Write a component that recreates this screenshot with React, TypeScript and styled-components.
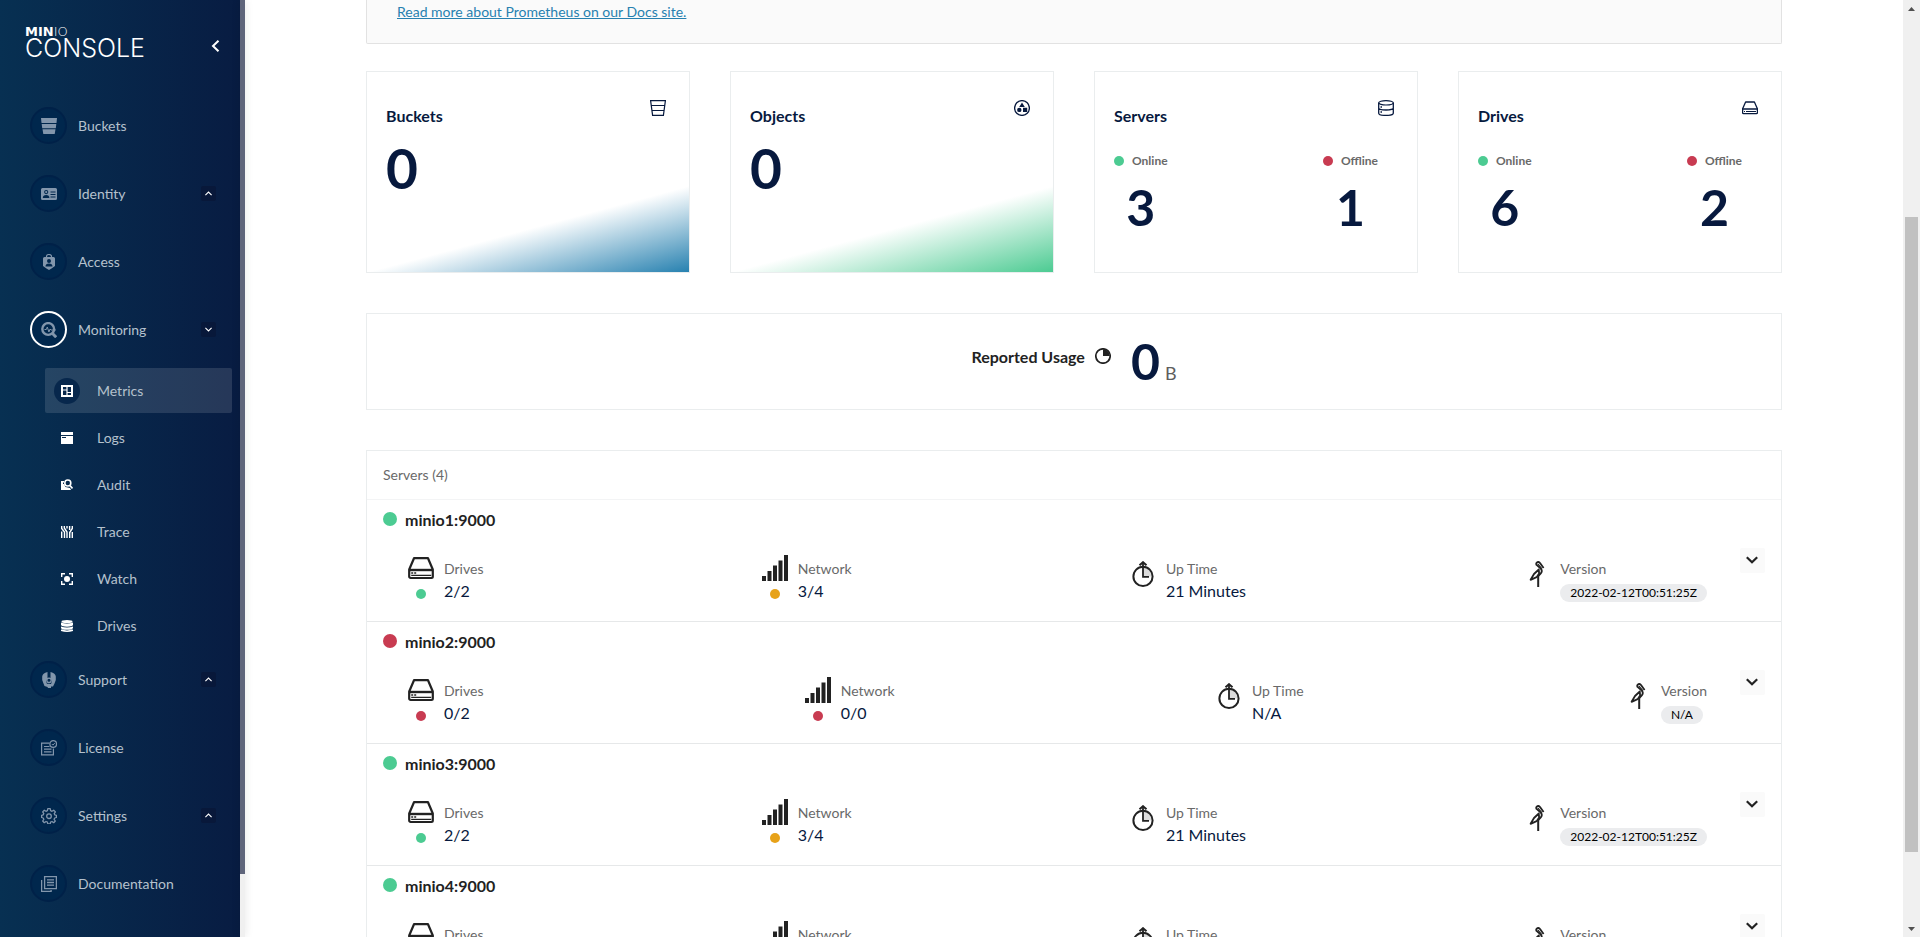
import React from "react";
import styled, { createGlobalStyle, css } from "styled-components";

const color = {
  navy: "#07193e",
  text: "#222222",
  muted: "#696969",
  line: "#eaedee",
  green: "#4ccb92",
  red: "#c83b51",
  amber: "#e7a219",
  blue: "#2781b0",
};

const GlobalStyle = createGlobalStyle`
  * { box-sizing: border-box; }
  body {
    margin: 0;
    background: #fff;
    color: ${color.text};
    font-family: Lato, "Liberation Sans", sans-serif;
    font-size: 14px;
    overflow: hidden;
  }
  ul, h1, h2, h3, p, dl, dd { margin: 0; padding: 0; }
  ul { list-style: none; }
  button { font: inherit; color: inherit; border: 0; padding: 0; cursor: pointer; }
  svg { display: block; flex: none; }
`;

/* ---------- shell ---------- */

const Shell = styled.div`
  display: flex;
  height: 100vh;
  overflow: hidden;
`;

const Sidebar = styled.aside`
  display: flex;
  flex-direction: column;
  flex: 0 0 240px;
  overflow: hidden;
  background: linear-gradient(90deg, #073052 0%, #081c42 100%);
  color: #b5c1cd;
`;

const MenuScroll = styled.div`
  flex: 0 0 5px;
  background: #f0f0f0;
  box-shadow: 0 0 8px rgba(0, 0, 0, 0.12);
  z-index: 1;
`;

const MenuThumb = styled.div`
  height: 93.3%;
  background: #5f657b;
`;

const Content = styled.main`
  flex: 1;
  min-width: 0;
  overflow: hidden;
  background: #fff;
`;

const PageScroll = styled.div`
  flex: 0 0 17px;
  display: flex;
  flex-direction: column;
  align-items: center;
  background: #f0f0f0;
`;

const ScrollArrow = styled.div`
  display: flex;
  align-items: center;
  justify-content: center;
  height: 17px;
`;

const ScrollTrack = styled.div`
  flex: 1;
  width: 13px;
  display: flex;
  flex-direction: column;
`;

const ScrollGap = styled.div<{ $grow: number }>`
  flex: ${(p) => p.$grow} 0 0;
`;

const ScrollThumb = styled.div`
  flex: 635 0 0;
  background: #c1c1c1;
`;

/* ---------- sidebar ---------- */

const Brand = styled.header`
  display: flex;
  justify-content: space-between;
  align-items: flex-start;
  padding: 25px 20px 0 25px;
  height: 94px;
  flex: none;
  color: #fff;
`;

const LogoSmall = styled.div`
  font: 900 13px/14px "DejaVu Sans", sans-serif;
  span { font-weight: 200; }
`;

const LogoBig = styled.div`
  font: 300 25px/18px Inter, sans-serif;
`;

const CollapseButton = styled.button`
  display: flex;
  align-items: center;
  justify-content: flex-end;
  width: 12px;
  height: 16px;
  margin-top: 13px;
  background: none;
`;

const NavRow = styled.a`
  display: flex;
  align-items: center;
  height: 68px;
  padding: 13px 24px 18px 30px;
  color: inherit;
  font-size: 14px;
  text-decoration: none;
`;

const NavIcon = styled.span<{ $active?: boolean }>`
  display: flex;
  align-items: center;
  justify-content: center;
  width: 37px;
  height: 37px;
  margin-right: 11px;
  border-radius: 50%;
  background: #00274d;
  border: 2px solid ${(p) => (p.$active ? "#fff" : "#002148")};
  color: #8296ac;
`;

const Toggle = styled.span`
  display: flex;
  align-items: center;
  justify-content: center;
  width: 15px;
  height: 15px;
  margin-left: auto;
  border-radius: 2px;
  background: #08183a;
  color: #fff;
`;

const SubList = styled.ul`
  display: flex;
  flex-direction: column;
  gap: 2px;
  margin: 2px 8px 0 45px;
`;

const SubRow = styled.a<{ $active?: boolean }>`
  display: flex;
  align-items: center;
  gap: 17px;
  height: 45px;
  padding-left: 9px;
  border-radius: 2px;
  color: inherit;
  font-size: 14px;
  text-decoration: none;
  ${(p) => p.$active && css`background: rgba(255, 255, 255, 0.12);`}
`;

const SubIcon = styled.span<{ $active?: boolean }>`
  display: flex;
  align-items: center;
  justify-content: center;
  width: 26px;
  height: 26px;
  border-radius: 50%;
  color: #fff;
  ${(p) => p.$active && css`background: #07274c;`}
`;

/* ---------- content ---------- */

const Column = styled.div`
  width: 100%;
  max-width: 1416px;
  margin: 0 auto;
`;

const HelpBox = styled.section`
  height: 44px;
  padding: 2px 30px 0;
  border: 1px solid #e2e2e2;
  border-top: 0;
  border-radius: 0 0 2px 2px;
  background: #fafafa;
  line-height: 20px;
  a { color: ${color.blue}; }
`;

const CardGrid = styled.div`
  display: grid;
  grid-template-columns: repeat(4, 1fr);
  gap: 40px;
  margin-top: 27px;
`;

const Card = styled.section<{ $tint?: string }>`
  height: 202px;
  padding: 28px 23px 0 19px;
  border: 1px solid ${color.line};
  color: ${color.navy};
  ${(p) => p.$tint && css`background: linear-gradient(-15deg, ${p.$tint} 0%, #fff 30%);`}
`;

const CardHead = styled.div`
  display: flex;
  justify-content: space-between;
  align-items: flex-start;
`;

const CardTitle = styled.h2`
  padding-top: 6px;
  font-size: 16px;
  line-height: 20px;
  font-weight: 700;
`;

const BigNumber = styled.p`
  margin-top: 12px;
  font-size: 55px;
  line-height: 60px;
  font-weight: 700;
`;

const CountRow = styled.div`
  display: flex;
  justify-content: space-between;
  margin: 26px 16px 0 0;
`;

const Count = styled.div`
  display: flex;
  flex-direction: column;
  align-items: center;
`;

const CountLabel = styled.div`
  display: flex;
  align-items: center;
  gap: 8px;
  color: ${color.muted};
  font-size: 12px;
  line-height: 18px;
  font-weight: 700;
`;

const CountValue = styled.p`
  margin-top: 7px;
  font-size: 50px;
  line-height: 60px;
  font-weight: 700;
`;

const Dot = styled.span<{ $color: string; $size?: number }>`
  flex: none;
  width: ${(p) => p.$size ?? 10}px;
  height: ${(p) => p.$size ?? 10}px;
  border-radius: 50%;
  background: ${(p) => p.$color};
`;

const Usage = styled.section`
  display: flex;
  justify-content: center;
  height: 97px;
  margin-top: 40px;
  padding-top: 17px;
  border: 1px solid ${color.line};
`;

const UsageTitle = styled.h2`
  display: flex;
  align-items: center;
  gap: 10px;
  height: 50px;
  margin-right: 20px;
  font-size: 16px;
  font-weight: 700;
`;

const UsageValue = styled.p`
  color: ${color.navy};
  font-size: 50px;
  line-height: 60px;
  font-weight: 700;
  span {
    margin-left: 5px;
    color: #5e5e5e;
    font-size: 18px;
    font-weight: 400;
  }
`;

const ServerPanel = styled.section`
  margin-top: 40px;
  border: 1px solid ${color.line};
`;

const PanelTitle = styled.h2`
  height: 49px;
  padding: 14px 16px 0;
  border-bottom: 1px solid #f3f4f5;
  color: ${color.muted};
  font-size: 14px;
  line-height: 20px;
  font-weight: 400;
`;

const ServerRow = styled.li`
  height: 122px;
  padding: 9px 16px 0;
  border-bottom: 1px solid #e6e8e9;
`;

const ServerName = styled.h3`
  display: flex;
  align-items: flex-start;
  gap: 8px;
  height: 20px;
  padding-top: 3px;
  font-size: 16px;
  line-height: 16px;
`;

const ServerBody = styled.div`
  display: flex;
  align-items: flex-start;
  padding-top: 19px;
`;

const Stats = styled.dl`
  flex: 1;
  display: flex;
  justify-content: space-between;
  margin: 7px 33px 0 25px;
`;

const Stat = styled.div`
  display: flex;
  gap: 10px;
`;

const StatIcon = styled.div<{ $single?: boolean }>`
  display: flex;
  flex-direction: column;
  align-items: center;
  gap: 8px;
  width: 26px;
  padding-top: ${(p) => (p.$single ? 6 : 0)}px;
`;

const StatText = styled.div`
  padding-top: 4px;
`;

const StatLabel = styled.dt`
  color: ${color.muted};
  font-size: 14px;
  line-height: 20px;
`;

const StatValue = styled.dd`
  color: ${color.navy};
  font-size: 16px;
  line-height: 24px;
`;

const Pill = styled.dd`
  width: max-content;
  height: 18px;
  margin-top: 5px;
  padding: 0 10px;
  border-radius: 9px;
  background: #ebecee;
  color: #000;
  font-size: 12px;
  line-height: 18px;
`;

const ExpandButton = styled.button`
  display: flex;
  align-items: center;
  justify-content: center;
  width: 25px;
  height: 25px;
  border-radius: 2px;
  background: #fafafa;
`;

/* ---------- icons ---------- */

const Svg = ({ size = 16, box = 16, children }: { size?: number; box?: number; children: React.ReactNode }) => (
  <svg width={size} height={size} viewBox={`0 0 ${box} ${box}`} fill="none" stroke="currentColor" aria-hidden="true">
    {children}
  </svg>
);

const BucketSolid = () => (
  <Svg>
    <path stroke="none" fill="currentColor" d="M0 0h16l-.5 5H.5zM.7 6h14.600l-.5 4.200H1.200zM1.500 11.200h13l-.8 4.800H2.300z" />
  </Svg>
);
const IdCard = () => (
  <Svg>
    <path
      stroke="none"
      fill="currentColor"
      fillRule="evenodd"
      d="M1.500 2h13A1.500 1.500 0 0 1 16 3.500v9a1.500 1.500 0 0 1-1.500 1.500h-13A1.500 1.500 0 0 1 0 12.500v-9A1.500 1.500 0 0 1 1.500 2zM5.200 4a2.100 2.100 0 1 0 .01 4.200A2.100 2.100 0 0 0 5.200 4zM1.800 12h6.600c0-1.800-1-3-3.200-3s-3.400 1.200-3.400 3zM9.500 5.500v1h5v-1zM9.500 8v1h5V8zM9.500 10.500v1h5v-1z"
    />
    <circle cx="5.200" cy="6.100" r="1.100" stroke="none" fill="currentColor" />
  </Svg>
);
const Badge = () => (
  <Svg>
    <path d="M5.500 4V2.500a2.500 2 0 0 1 5 0V4" strokeWidth="1.200" />
    <path
      stroke="none"
      fill="currentColor"
      fillRule="evenodd"
      d="M3.500 3h9q1.500 0 1.500 1.500V12l-3.500 2.500L8 16l-2.500-1.500L2 12V4.500Q2 3 3.500 3zM8 5a2 2 0 1 0 .01 4A2 2 0 0 0 8 5zM4.500 12.500h7c0-2-1.300-3-3.500-3s-3.500 1-3.500 3z"
    />
  </Svg>
);
const MonitorGlass = () => (
  <Svg>
    <circle cx="7.200" cy="7" r="5.900" strokeWidth="2.400" />
    <path d="M11.500 11.500 15.200 15.200" strokeWidth="3" />
    <path d="M3.500 7.500h1.800l1-2.500 1.600 5 1.200-3 .8 1h5" strokeWidth="1" />
  </Svg>
);
const Headset = () => (
  <Svg>
    <path stroke="none" fill="currentColor" d="M6.500 0v6.500L5 9l1 3-3.500-.5L1.200 8V4.500Q1.500 1 6.500 0zM9.500 0v6.500l1.500 2.500-1 3 3.500-.5L14.800 8V4.500Q14.500 1 9.500 0zM2.500 11.500l3.500.3 4.500.2 3-.5-1.500 3h-2V16H7l-.5-1L3.500 14z" />
    <circle cx="8" cy="8.300" r="2.200" strokeWidth="1.300" />
  </Svg>
);
const LicenseDoc = () => (
  <Svg>
    <path d="M8.500 3.200H.6v11.600h11.800V8.500" strokeWidth="1.200" />
    <path d="M3 6.500h5.500M3 9.200h7.500M3 11.800h7.500" strokeWidth="1.200" />
    <circle cx="12.200" cy="4" r="3.300" strokeWidth="1.200" />
    <path d="m10.800 4 1.100 1.100 1.900-2" strokeWidth="1" />
  </Svg>
);
const Gear = () => (
  <Svg>
    <path
      strokeWidth="1.300"
      strokeLinejoin="round"
      d="M6.800.7h2.400l.4 2 1.400.6 1.700-1.100 1.700 1.700-1.200 1.700.6 1.300 1.600.4v2.200l-1.700.5-.6 1.300 1.200 1.700-1.600 1.700-1.700-1.200-1.400.6-.4 1.700H6.800l-.4-1.700-1.400-.6-1.700 1.200-1.600-1.700 1.100-1.700-.6-1.300-1.600-.5V7.300l1.600-.4.6-1.300-1.100-1.700 1.600-1.700L5 3.300l1.400-.6z"
    />
    <circle cx="8" cy="8.200" r="2.300" strokeWidth="1.300" />
  </Svg>
);
const Docs = () => (
  <Svg>
    <path d="M3.600.6h11.800v12H3.600z" strokeWidth="1.300" />
    <path d="M.6 4v11.400h9.500V14M6 3.800h7M6 6.500h7M6 9.200h7" strokeWidth="1.300" />
  </Svg>
);

const MetricsIcon = () => (
  <Svg size={12} box={12}>
    <path d="M1 1h10v10H1z" strokeWidth="2" />
    <path d="M6 1v10M1 5h5M6 7.500h5" strokeWidth="1.200" />
  </Svg>
);
const LogsIcon = () => (
  <Svg size={12} box={12}>
    <path stroke="none" fill="currentColor" fillRule="evenodd" d="M0 0h12v3H0zM0 4h12v8H0zM1 5v1h4V5z" />
  </Svg>
);
const AuditIcon = () => (
  <Svg size={12} box={12}>
    <path stroke="none" fill="currentColor" d="M0 2h3v1.500H2V5h1l1.500 3L9 9l1 2H0z" />
    <circle cx="6.800" cy="4" r="3" strokeWidth="1.600" />
    <path d="m9 6.500 2.500 3" strokeWidth="1.800" />
  </Svg>
);
const TraceIcon = () => (
  <Svg size={12} box={12}>
    <path d="M.7 0v2.500L3.500 6v6M.7 5.500V12M3.300 0v2L6 6v6M6 0v2.500M8.600 0v4M11.300 0v2.500L8.700 6.500V12M11.300 6v6" strokeWidth="1.400" />
  </Svg>
);
const WatchIcon = () => (
  <Svg size={12} box={12}>
    <path d="M.7 4V.7H4M8 .7h3.300V4M11.300 8v3.300H8M4 11.300H.7V8" strokeWidth="1.400" />
    <circle cx="6" cy="6" r="3" stroke="none" fill="currentColor" />
  </Svg>
);
const StackSolid = () => (
  <Svg size={12} box={12}>
    <ellipse cx="6" cy="1.500" rx="5.500" ry="1.500" stroke="none" fill="currentColor" />
    <path stroke="none" fill="currentColor" d="M0 2.500q6 2 12 0V5L11 6q-5 1.300-10 0L0 5zM0 6.500q6 1.800 12 0V8l-1 1.200q-5 1.200-10 0L0 8zM0 9.600q6 1.600 12 0V11q-6 2-12 0z" />
  </Svg>
);

const BucketOutline = () => (
  <Svg>
    <path d="M.6.600h14.800L13.400 15.400H2.600zM1.200 5.500h13.600M2 10.500h12" strokeWidth="1.200" />
  </Svg>
);
const ObjectsIcon = () => (
  <Svg>
    <circle cx="8" cy="8" r="7.400" strokeWidth="1.300" />
    <path stroke="none" fill="currentColor" d="M8 2.600 10.800 7H5.200zM9 7.800h4.200V12H9z" />
    <circle cx="5.300" cy="9.900" r="2.200" stroke="none" fill="currentColor" />
  </Svg>
);
const ServersIcon = () => (
  <Svg>
    <ellipse cx="8" cy="2.800" rx="7.300" ry="2.200" strokeWidth="1.200" />
    <path d="M.7 2.800v10.400c0 1.200 3.300 2.200 7.300 2.200s7.300-1 7.300-2.200V2.800M.7 8c0 1.200 3.300 2 7.300 2s7.300-.8 7.300-2" strokeWidth="1.300" />
    <path d="M2.500 7h1.500M2.500 12h1.500" strokeWidth="1.400" />
  </Svg>
);
const DriveSmall = () => (
  <Svg>
    <path d="M3.600 2h8.800l3 6.700v4a1 1 0 0 1-1 1H1.600a1 1 0 0 1-1-1v-4z" strokeWidth="1.300" strokeLinejoin="round" />
    <path d="M.5 9h15" strokeWidth="1.500" />
    <path d="M2 11.500h1M4 11.500h10" strokeWidth="1" />
  </Svg>
);
const DriveLarge = () => (
  <Svg size={26} box={26}>
    <path d="M6 3.200h14l4.800 11.300v7.100a1.400 1.400 0 0 1-1.400 1.400H2.600a1.400 1.400 0 0 1-1.400-1.400v-7.100z" strokeWidth="2.200" strokeLinejoin="round" />
    <path d="M1 15h24" strokeWidth="2.400" />
    <path d="M3.200 18h2M6.200 18h2M3.200 20.300h20" strokeWidth="1.300" />
  </Svg>
);
const NetworkIcon = () => (
  <Svg size={26} box={26}>
    <path stroke="none" fill="currentColor" d="M0 21h4v5H0zM5.500 16h4v10h-4zM11 10.500h4V26h-4zM16.500 5.500h4V26h-4zM22 0h4v26h-4z" />
  </Svg>
);
const UptimeIcon = () => (
  <Svg size={26} box={26}>
    <path d="M13 6.500h1a9 9 0 0 1 7.500 9H13z" stroke="none" fill="#dcdcdc" />
    <circle cx="13" cy="15.400" r="9.600" strokeWidth="2" />
    <path d="M13 2v13.800h6" strokeWidth="1.800" />
    <path d="M9.500 4.200 13 1.200l3.500 3" strokeWidth="2" />
  </Svg>
);
const VersionIcon = () => (
  <Svg size={26} box={26}>
    <path d="M19.600 7 16.200 2.200Q14.500 0 12.500 1.800q-.8 1.500.6 2.600l3.700 3.200q2 2.600 0 4.800L14.400 15" strokeWidth="1.800" strokeLinejoin="round" />
    <path d="M14 3.200 17.800 7.600" strokeWidth="1.200" />
    <path d="M14.800 8.500 10 13 6.600 18.800l6-2.600 2.500-3.700z" strokeWidth="1.800" strokeLinejoin="round" />
    <path d="M14.200 14.500V26" strokeWidth="2" />
  </Svg>
);
const PieIcon = () => (
  <Svg>
    <circle cx="8" cy="8" r="7.200" strokeWidth="1.700" />
    <path d="M8 1.200A6.800 6.800 0 0 1 14.800 8H8z" stroke="none" fill="currentColor" />
  </Svg>
);

const Caret = ({ dir }: { dir: "up" | "down" }) => (
  <svg width="7" height="5" viewBox="0 0 7 5" fill="none" stroke="currentColor" strokeWidth="1.100" aria-hidden="true">
    <path d={dir === "up" ? "M.4 4.200 3.500 1l3.100 3.200" : "M.4.800 3.500 4 6.600.8"} />
  </svg>
);
const ScrollTriangle = ({ dir }: { dir: "up" | "down" }) => (
  <svg width="7" height="4" viewBox="0 0 7 4" aria-hidden="true">
    <path fill="#505050" d={dir === "up" ? "M3.500 0 7 4H0z" : "M0 0h7L3.500 4z"} />
  </svg>
);

/* ---------- data ---------- */

type NavEntry = { label: string; icon: React.ReactNode; toggle?: "up" | "down"; children?: NavEntry[] };

const nav: NavEntry[] = [
  { label: "Buckets", icon: <BucketSolid /> },
  { label: "Identity", icon: <IdCard />, toggle: "up" },
  { label: "Access", icon: <Badge /> },
  {
    label: "Monitoring",
    icon: <MonitorGlass />,
    toggle: "down",
    children: [
      { label: "Metrics", icon: <MetricsIcon /> },
      { label: "Logs", icon: <LogsIcon /> },
      { label: "Audit", icon: <AuditIcon /> },
      { label: "Trace", icon: <TraceIcon /> },
      { label: "Watch", icon: <WatchIcon /> },
      { label: "Drives", icon: <StackSolid /> },
    ],
  },
  { label: "Support", icon: <Headset />, toggle: "up" },
  { label: "License", icon: <LicenseDoc /> },
  { label: "Settings", icon: <Gear />, toggle: "up" },
  { label: "Documentation", icon: <Docs /> },
];

const release = "2022-02-12T00:51:25Z";
const servers = [
  { name: "minio1:9000", up: true, drives: "2/2", network: "3/4", uptime: "21 Minutes", version: release },
  { name: "minio2:9000", up: false, drives: "0/2", network: "0/0", uptime: "N/A", version: "N/A" },
  { name: "minio3:9000", up: true, drives: "2/2", network: "3/4", uptime: "21 Minutes", version: release },
  { name: "minio4:9000", up: true, drives: "2/2", network: "3/4", uptime: "21 Minutes", version: release },
];

/* ---------- parts ---------- */

const TotalCard = ({ title, icon, value, tint }: { title: string; icon: React.ReactNode; value: number; tint: string }) => (
  <Card $tint={tint}>
    <CardHead>
      <CardTitle>{title}</CardTitle>
      {icon}
    </CardHead>
    <BigNumber>{value}</BigNumber>
  </Card>
);

const StatusCard = ({ title, icon, online, offline }: { title: string; icon: React.ReactNode; online: number; offline: number }) => (
  <Card>
    <CardHead>
      <CardTitle>{title}</CardTitle>
      {icon}
    </CardHead>
    <CountRow>
      <Count>
        <CountLabel><Dot $color={color.green} />Online</CountLabel>
        <CountValue>{online}</CountValue>
      </Count>
      <Count>
        <CountLabel><Dot $color={color.red} />Offline</CountLabel>
        <CountValue>{offline}</CountValue>
      </Count>
    </CountRow>
  </Card>
);

const ServerItem = ({ s }: { s: (typeof servers)[number] }) => (
  <ServerRow>
    <ServerName><Dot $size={14} $color={s.up ? color.green : color.red} />{s.name}</ServerName>
    <ServerBody>
      <Stats>
        <Stat>
          <StatIcon><DriveLarge /><Dot $color={s.up ? color.green : color.red} /></StatIcon>
          <StatText><StatLabel>Drives</StatLabel><StatValue>{s.drives}</StatValue></StatText>
        </Stat>
        <Stat>
          <StatIcon><NetworkIcon /><Dot $color={s.up ? color.amber : color.red} /></StatIcon>
          <StatText><StatLabel>Network</StatLabel><StatValue>{s.network}</StatValue></StatText>
        </Stat>
        <Stat>
          <StatIcon $single><UptimeIcon /></StatIcon>
          <StatText><StatLabel>Up Time</StatLabel><StatValue>{s.uptime}</StatValue></StatText>
        </Stat>
        <Stat>
          <StatIcon $single><VersionIcon /></StatIcon>
          <StatText><StatLabel>Version</StatLabel><Pill>{s.version}</Pill></StatText>
        </Stat>
      </Stats>
      <ExpandButton aria-label={`Expand ${s.name}`}>
        <svg width="13" height="9" viewBox="0 0 13 9" fill="none" stroke="currentColor" strokeWidth="2.200" aria-hidden="true">
          <path d="m.8 1.300 5.200 5L11.200 1.300" />
        </svg>
      </ExpandButton>
    </ServerBody>
  </ServerRow>
);

export default function App() {
  return (
    <>
      <GlobalStyle />
      <Shell>
        <Sidebar>
          <Brand>
            <div>
              <LogoSmall>MIN<span>IO</span></LogoSmall>
              <LogoBig>CONSOLE</LogoBig>
            </div>
            <CollapseButton aria-label="Collapse menu">
              <svg width="9" height="12" viewBox="0 0 9 12" fill="none" stroke="currentColor" strokeWidth="2" aria-hidden="true">
                <path d="M7.500 .7 2 6l5.500 5.300" />
              </svg>
            </CollapseButton>
          </Brand>
          <nav>
            <ul>
              {nav.map((n) => (
                <li key={n.label}>
                  <NavRow href="#">
                    <NavIcon $active={!!n.children}>{n.icon}</NavIcon>
                    {n.label}
                    {n.toggle && <Toggle><Caret dir={n.toggle} /></Toggle>}
                  </NavRow>
                  {n.children && (
                    <SubList>
                      {n.children.map((c, i) => (
                        <li key={c.label}>
                          <SubRow href="#" $active={i === 0}>
                            <SubIcon $active={i === 0}>{c.icon}</SubIcon>
                            {c.label}
                          </SubRow>
                        </li>
                      ))}
                    </SubList>
                  )}
                </li>
              ))}
            </ul>
          </nav>
        </Sidebar>
        <MenuScroll><MenuThumb /></MenuScroll>

        <Content>
          <Column>
            <HelpBox><a href="#">Read more about Prometheus on our Docs site.</a></HelpBox>
            <CardGrid>
              <TotalCard title="Buckets" icon={<BucketOutline />} value={0} tint={color.blue} />
              <TotalCard title="Objects" icon={<ObjectsIcon />} value={0} tint={color.green} />
              <StatusCard title="Servers" icon={<ServersIcon />} online={3} offline={1} />
              <StatusCard title="Drives" icon={<DriveSmall />} online={6} offline={2} />
            </CardGrid>
            <Usage>
              <UsageTitle>Reported Usage<PieIcon /></UsageTitle>
              <UsageValue>0<span>B</span></UsageValue>
            </Usage>
            <ServerPanel>
              <PanelTitle>Servers (4)</PanelTitle>
              <ul>{servers.map((s) => <ServerItem key={s.name} s={s} />)}</ul>
            </ServerPanel>
          </Column>
        </Content>

        <PageScroll>
          <ScrollArrow><ScrollTriangle dir="up" /></ScrollArrow>
          <ScrollTrack>
            <ScrollGap $grow={200} />
            <ScrollThumb />
            <ScrollGap $grow={68} />
          </ScrollTrack>
          <ScrollArrow><ScrollTriangle dir="down" /></ScrollArrow>
        </PageScroll>
      </Shell>
    </>
  );
}
